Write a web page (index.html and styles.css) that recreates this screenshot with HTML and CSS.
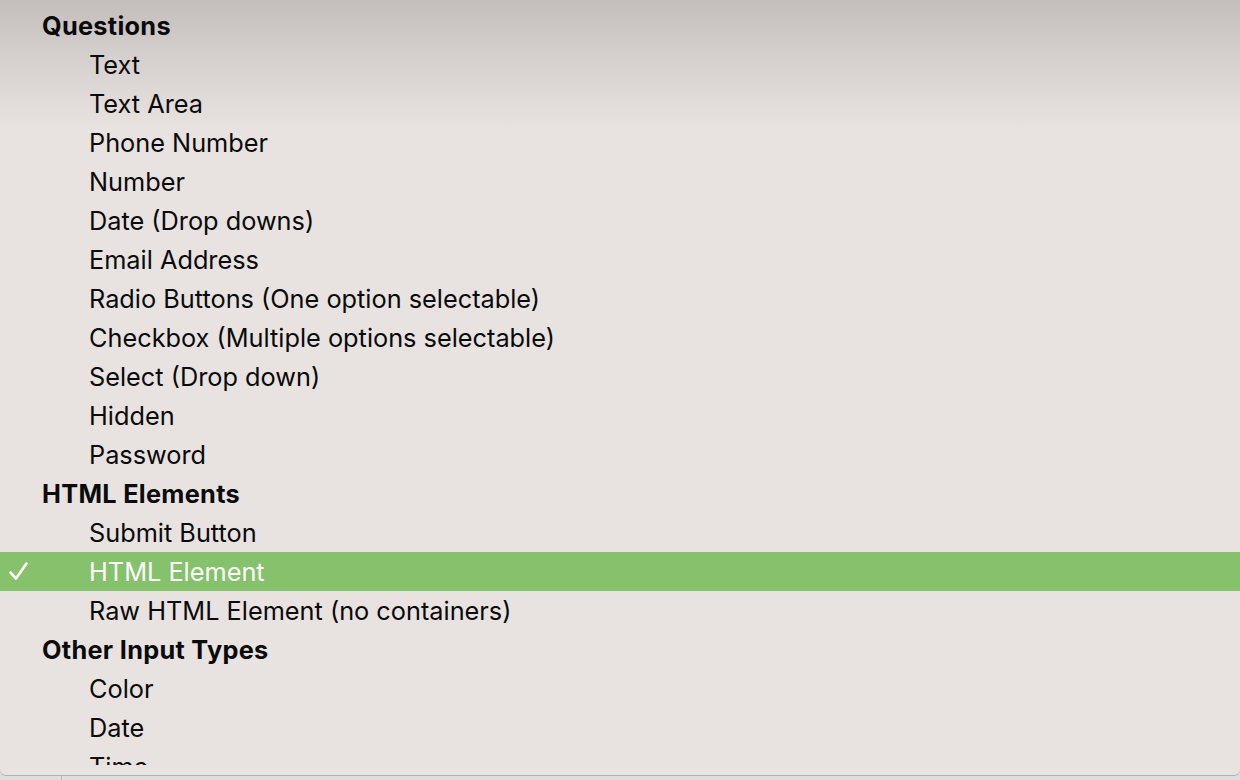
FILE: index.html
```html
<!DOCTYPE html>
<html>
<head>
<meta charset="utf-8">
<link rel="stylesheet" href="styles.css">
</head>
<body>
<div class="screen">
  <div class="menu">
    <div class="scroll">
      <div class="group">Questions</div>
      <div class="item">Text</div>
      <div class="item">Text Area</div>
      <div class="item">Phone Number</div>
      <div class="item">Number</div>
      <div class="item">Date (Drop downs)</div>
      <div class="item">Email Address</div>
      <div class="item">Radio Buttons (One option selectable)</div>
      <div class="item">Checkbox (Multiple options selectable)</div>
      <div class="item">Select (Drop down)</div>
      <div class="item">Hidden</div>
      <div class="item">Password</div>
      <div class="group">HTML Elements</div>
      <div class="item">Submit Button</div>
      <div class="item selected"><svg class="check" width="22" height="22" viewBox="0 0 22 22"><path d="M2.5 11.5 L8 17.5 L18.5 2.5" fill="none" stroke="#fff" stroke-width="2.6" stroke-linecap="round" stroke-linejoin="round"/></svg>HTML Element</div>
      <div class="item">Raw HTML Element (no containers)</div>
      <div class="group">Other Input Types</div>
      <div class="item">Color</div>
      <div class="item">Date</div>
      <div class="item">Time</div>
    </div>
  </div>
  <div class="below"><div class="below-left"></div><div class="below-right"></div></div>
</div>
</body>
</html>
```
FILE: styles.css
```css
html, body {
  margin: 0;
  padding: 0;
  width: 1240px;
  height: 780px;
  overflow: hidden;
  background: #dcdcdc;
}
.screen {
  width: 1240px;
  height: 780px;
  display: flex;
  flex-direction: column;
}
.menu {
  height: 775px;
  flex: none;
  background: linear-gradient(to bottom, #c3bebb 0px, #d6d1ce 60px, #e8e3e0 130px, #e8e3e0 100%);
  border-bottom-left-radius: 6px;
  border-bottom-right-radius: 6px;
  box-shadow: 0 1px 0 #b3b1b0;
  box-sizing: border-box;
  padding-top: 6px;
  font-family: Inter, "Noto Sans", "Liberation Sans", sans-serif;
  font-size: 25.3px;
  color: #0a0a0a;
}
.scroll {
  height: 759px;
  overflow: hidden;
}
.group, .item {
  height: 39px;
  line-height: 39px;
  white-space: nowrap;
  position: relative;
}
.group {
  padding-left: 42px;
  font-weight: 700;
  letter-spacing: 0.3px;
}
.item {
  padding-left: 89px;
}
.selected {
  background: #86c16c;
  color: #fff;
}
.check {
  position: absolute;
  left: 8px;
  top: 9px;
}
.below {
  flex: 1;
  display: flex;
  margin-top: 1px;
}
.below-left {
  width: 61px;
  border-right: 1px solid #b8b8b8;
  background: #dedede;
}
.below-right {
  flex: 1;
  background: #dedede;
}
```
